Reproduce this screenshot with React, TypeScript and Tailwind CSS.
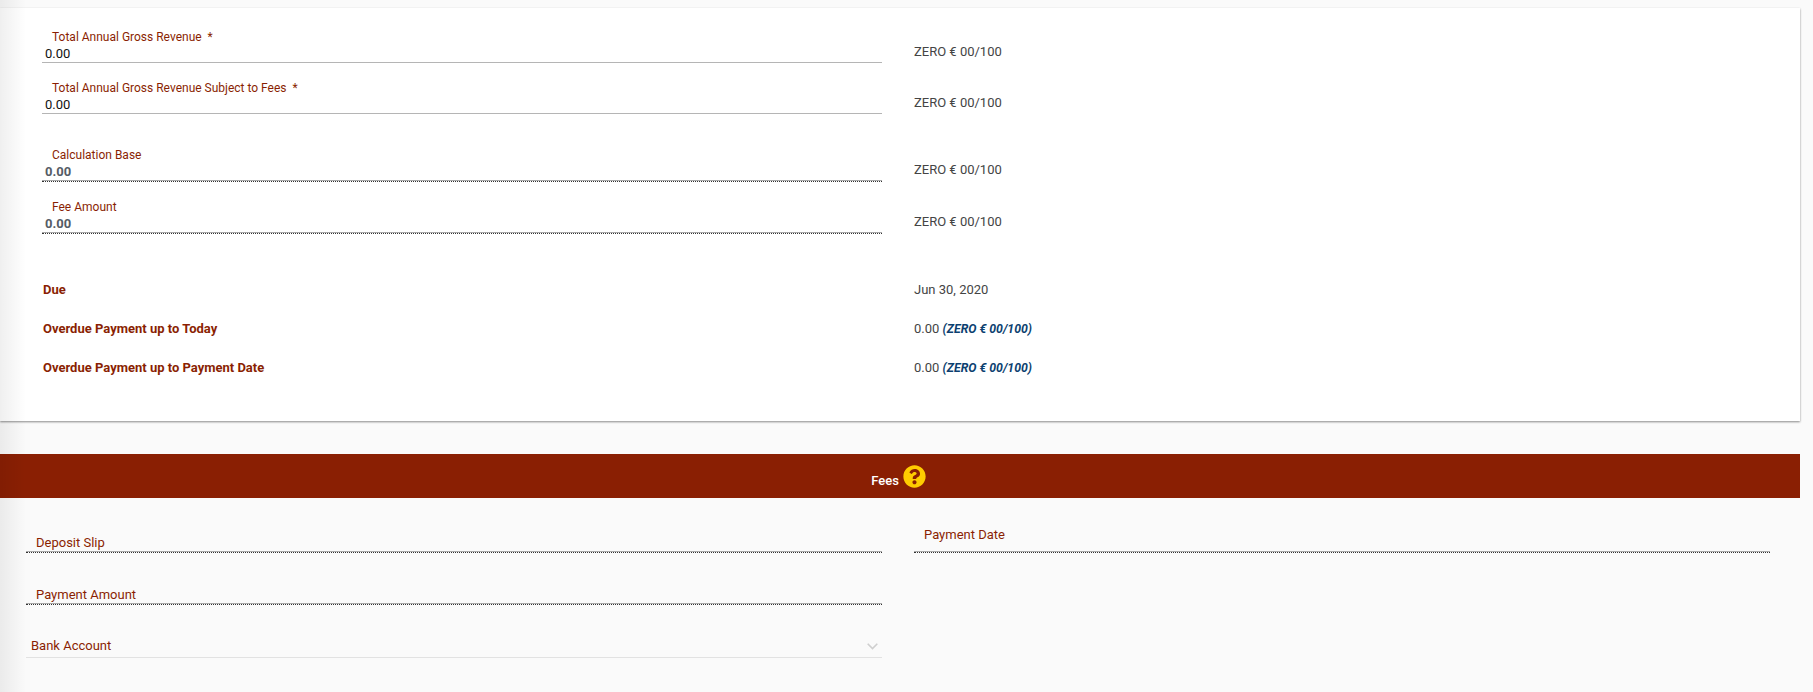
import React from "react";
import { FaQuestionCircle } from "react-icons/fa";

const RED = "text-[#8a1f03]";

function CardRow({ label, req, dotted, mt }: { label: string; req?: string; dotted?: boolean; mt: string }) {
  return (
    <div className={`flex ${mt}`}>
      <div className="w-[840px] shrink-0">
        <div className={`pl-[10px] h-[17px] text-[12px] leading-[17px] ${RED} whitespace-pre`}>
          {label}
          {req}
        </div>
        {dotted ? (
          <div className="h-[18px] pl-[3px] text-[13px] leading-[16px] font-bold text-[#555c66] border-b border-dotted border-[#333] shadow-[inset_0_-1px_0_#a8a8a8]">
            0.00
          </div>
        ) : (
          <div className="h-[17px] pl-[3px] text-[13px] leading-[16px] text-[#111] border-b border-[#b5b5b5]">
            0.00
          </div>
        )}
      </div>
      <div className="ml-[32px] pt-[13px] text-[13px] leading-[19px] text-[#444]">ZERO € 00/100</div>
    </div>
  );
}

function InfoRow({ label, children, mt }: { label: string; children: React.ReactNode; mt: string }) {
  return (
    <div className={`flex h-[19px] items-center text-[13px] leading-[19px] ${mt}`}>
      <div className={`w-[872px] shrink-0 pl-[1px] font-bold ${RED}`}>{label}</div>
      <div className="text-[#444]">{children}</div>
    </div>
  );
}

function Amount() {
  return (
    <>
      0.00{" "}
      <span className="text-[12.25px] font-bold italic text-[#0c3f70]">(ZERO € 00/100)</span>
    </>
  );
}

function EmptyField({ label, pad, h }: { label: string; pad: string; h: string }) {
  return (
    <div className={`${h} ${pad} border-b border-dotted border-[#333] shadow-[inset_0_-1px_0_#a8a8a8] text-[13px] leading-[19px] ${RED}`}>{label}</div>
  );
}

export default function App() {
  return (
    <div className="relative h-[692px] w-[1813px] overflow-hidden bg-[#fafafa] font-['Roboto',sans-serif]">
      <div className="pointer-events-none absolute left-0 top-0 h-full w-[26px] bg-gradient-to-r from-[#00000010] to-transparent" />
      <div className="w-[1800px] pt-[8px]">
        <div className="h-[413px] bg-white pl-[42px] pt-[21px] shadow-[0_1px_2px_rgba(0,0,0,0.45)]">
          <CardRow mt="mt-0" label="Total Annual Gross Revenue" req="  *" />
          <CardRow mt="mt-[17px]" label="Total Annual Gross Revenue Subject to Fees" req="  *" />
          <CardRow mt="mt-[33px]" dotted label="Calculation Base" />
          <CardRow mt="mt-[17px]" dotted label="Fee Amount" />
          <InfoRow mt="mt-[46px]" label="Due">Jun 30, 2020</InfoRow>
          <InfoRow mt="mt-[20px]" label="Overdue Payment up to Today"><Amount /></InfoRow>
          <InfoRow mt="mt-[20px]" label="Overdue Payment up to Payment Date"><Amount /></InfoRow>
        </div>
        <div className="mt-[33px] flex h-[44px] items-center justify-center gap-[4px] bg-[#8a1f03] pr-[3px]">
          <span className="mt-[9px] text-[13px] font-medium leading-[19px] text-white">Fees</span>
          <FaQuestionCircle size={23} color="#ffcc00" />
        </div>
        <div className="flex gap-[32px] pl-[26px] pr-[30px]">
          <div className="w-[856px] shrink-0">
            <EmptyField label="Deposit Slip" pad="pl-[10px] pt-[35px]" h="h-[55px]" />
            <EmptyField label="Payment Amount" pad="pl-[10px] pt-[32px]" h="h-[52px]" />
            <div className={`relative mt-[24px] h-[29px] border-b border-[#e2e2e2] pl-[5px] pt-[7px] text-[13px] leading-[19px] ${RED}`}>
              Bank Account
              <svg className="absolute right-[4px] top-[14px]" width="11" height="7" viewBox="0 0 11 7" fill="none">
                <path d="M0.7 0.8 L5.5 5.6 L10.3 0.8" stroke="#cfcfcf" strokeWidth="1.6" />
              </svg>
            </div>
          </div>
          <div className="w-[856px] shrink-0">
            <EmptyField label="Payment Date" pad="pl-[10px] pt-[27px]" h="h-[55px]" />
          </div>
        </div>
      </div>
    </div>
  );
}
